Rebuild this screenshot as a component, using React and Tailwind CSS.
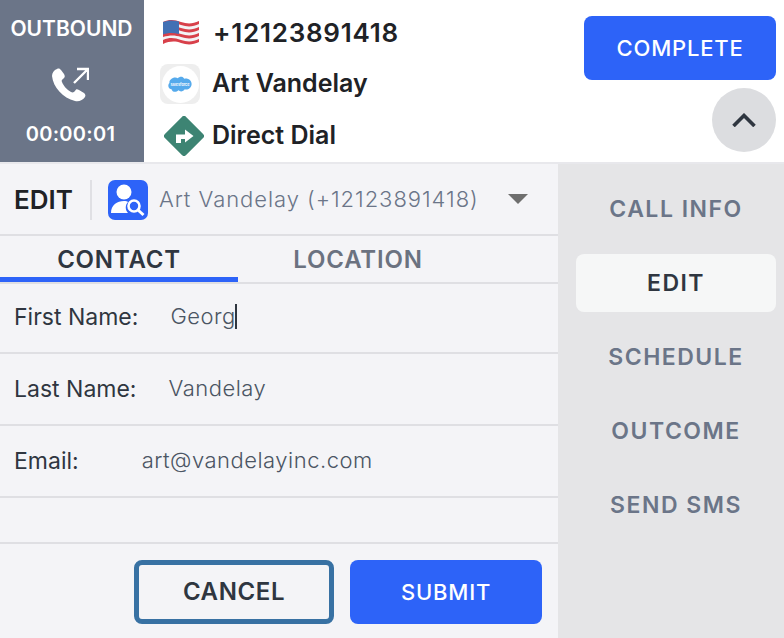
import React from 'react';

const inter = "font-['Inter',sans-serif]";

function Flag() {
    return (
        <svg width="38" height="28" viewBox="0 0 38 28">
            <path d="M1 4 C8 1 13 2 19 4 C25 6 31 6 37 3 V23 C31 26 25 26 19 24 C13 22 8 22 1 25 Z" fill="#f3f3f5" />
            <path d="M1 4 C8 1 13 2 19 4 C25 6 31 6 37 3 V6 C31 9 25 9 19 7 C13 5 8 5 1 7 Z" fill="#d8404a" />
            <path d="M1 10 C8 7 13 8 19 10 C25 12 31 12 37 9 V12 C31 15 25 15 19 13 C13 11 8 11 1 13 Z" fill="#d8404a" />
            <path d="M1 16 C8 13 13 14 19 16 C25 18 31 18 37 15 V18 C31 21 25 21 19 19 C13 17 8 17 1 19 Z" fill="#d8404a" />
            <path d="M1 22 C8 19 13 20 19 22 C25 24 31 24 37 21 V24 C31 27 25 27 19 25 C13 23 8 23 1 26 Z" fill="#d8404a" />
            <path d="M1 4 C6 2 11 2 17 3.4 V16 C11 14.5 6 14.5 1 16.5 Z" fill="#4270b4" />
        </svg>
    );
}

function CallIcon() {
    return (
        <svg width="38" height="36" viewBox="0 0 38 36" fill="none">
            <path d="M6 2 C3 3 1 6 1 9 C2 20 12 31 24 34 C28 35 32 33 34 30 C35 28 34 27 33 26 L28 23 C26 22 25 22 24 24 C23 25 22 26 20 25 C16 23 12 18 11 15 C10 13 12 12 13 11 C14 10 14 9 13 7 L10 3 C9 2 8 1 6 2 Z" fill="#fff" />
            <path d="M23 16 L36 3 M26 2 H37 V13" stroke="#fff" strokeWidth="2.4" />
        </svg>
    );
}

function SalesforceIcon() {
    return (
        <div className="w-10 h-10 rounded-lg bg-[#eeeeee] flex items-center justify-center">
            <div className="w-[37px] h-[37px] rounded-full bg-white flex items-center justify-center">
                <svg width="26" height="19" viewBox="0 0 24 18">
                    <path d="M10 3 C11.5 1 15 1 16 3.5 C19 2.5 23 4.5 23 8.5 C23 12.5 19 14.5 16.5 13.5 C15 16 12 16 10.5 14.5 C8 17 4.5 16 4 13.5 C1 13 0 9.5 2 7.5 C1.5 4 6.5 1 10 3 Z" fill="#55aaec" />
                    <text x="12" y="10" textAnchor="middle" fontSize="3.6" fill="#fff">salesforce</text>
                </svg>
            </div>
        </div>
    );
}

function DirectIcon() {
    return (
        <svg width="40" height="40" viewBox="0 0 40 40">
            <rect x="5" y="5" width="30" height="30" rx="3" transform="rotate(45 20 20)" fill="#3d8473" />
            <path d="M12 27 V18.5 H21 V13.5 L29.5 20 L21 26.5 V23 H17 V27 Z" fill="#fff" />
        </svg>
    );
}

function ContactSearchIcon() {
    return (
        <svg width="40" height="40" viewBox="0 0 40 40" className="mt-[2px]">
            <rect width="40" height="40" rx="7" fill="#2d63f8" />
            <circle cx="16" cy="12" r="7.5" fill="#fff" />
            <path d="M3 33 C3 25 9 21 16 21 C18 21 19 21 20 22 C17 25 17 30 20 33 Z" fill="#fff" />
            <circle cx="26" cy="26" r="5.5" fill="#2d63f8" stroke="#fff" strokeWidth="2.6" />
            <path d="M30 30 L35.5 35" stroke="#fff" strokeWidth="3" />
        </svg>
    );
}

function Field({ label, value, left, caret, height }) {
    return (
        <div className={`${height} flex items-center border-b-2 border-[#dfdfe3] pl-[14px]`}>
            <span className="text-[23px] text-[#2f3640]">{label}</span>
            <span className={`${left} mb-[2px] text-[22px] font-light tracking-[0.5px] text-[#4b5563] flex items-center`}>
                {value}
                {caret && <span className="w-[2px] h-[25px] -ml-px bg-[#2f3640]" />}
            </span>
        </div>
    );
}

const navItems = ['CALL INFO', 'EDIT', 'SCHEDULE', 'OUTCOME', 'SEND SMS'];

export default function App() {
    return (
        <div className={`${inter} w-[784px] h-[638px] overflow-hidden bg-white flex flex-col`}>

            {/* Call header */}
            <div className="h-[164px] shrink-0 flex border-b-2 border-[#e8e8ec]">
                <div className="w-[144px] bg-[#6b7588] text-white flex flex-col items-center font-semibold">
                    <div className="mt-[15px] pr-px text-[21px] leading-[28px]">OUTBOUND</div>
                    <div className="mt-[24px] mr-1 h-[36px]"><CallIcon /></div>
                    <div className="mt-[17px] mr-[3px] text-[20px] leading-[28px] tracking-[0.3px]">00:00:01</div>
                </div>
                <div className="flex-1 pl-4 flex flex-col text-[#202226] font-semibold text-[25px]">
                    <div className="h-[58px] pt-[6px] pl-[2px] flex items-center gap-[13px]">
                        <Flag />
                        <span className="text-[26px] tracking-[0.75px]">+12123891418</span>
                    </div>
                    <div className="h-[52px] flex items-center gap-3">
                        <SalesforceIcon />
                        <span>Art Vandelay</span>
                    </div>
                    <div className="h-[52px] pl-1 flex items-center gap-2">
                        <DirectIcon />
                        <span>Direct Dial</span>
                    </div>
                </div>
                <div className="w-[200px] pt-4 pr-2 flex flex-col items-end gap-2">
                    <button className="w-[192px] h-16 rounded-lg bg-[#2d63f8] text-white text-[22px] font-medium tracking-[0.8px]">COMPLETE</button>
                    <button className="w-16 h-16 rounded-full bg-[#dcdde0] flex items-center justify-center">
                        <svg width="24" height="14" viewBox="0 0 24 14" fill="none">
                            <path d="M1.5 13 L12 2.5 L22.5 13" stroke="#2f3640" strokeWidth="3.6" />
                        </svg>
                    </button>
                </div>
            </div>

            <div className="flex-1 flex">
                {/* Edit panel */}
                <div className="w-[558px] bg-[#f4f4f7] flex flex-col">
                    <div className="h-[72px] flex items-center border-b-2 border-[#dfdfe3] pl-[14px]">
                        <span className="text-[26px] font-semibold text-[#202226]">EDIT</span>
                        <div className="w-[2px] h-10 mt-[2px] bg-[#e0e0e4] ml-[17px] mr-4" />
                        <ContactSearchIcon />
                        <span className="ml-[11px] text-[22px] font-light tracking-[0.95px] text-[#6b7588]">Art Vandelay (+12123891418)</span>
                        <div className="ml-auto mr-[30px] w-0 h-0 border-x-[10px] border-x-transparent border-t-[10px] border-t-[#6e6e6e]" />
                    </div>
                    <div className="h-[48px] flex border-b-2 border-[#dfdfe3] text-[24px] font-semibold tracking-[0.8px]">
                        <div className="w-[238px] pt-[6px] border-b-[5px] border-[#2d63f8] text-[#2f3640] flex items-center justify-center">CONTACT</div>
                        <div className="w-[240px] pt-px text-[#6b7280] flex items-center justify-center">LOCATION</div>
                    </div>
                    <Field label="First Name:" value="Georg" left="ml-[32px]" caret height="h-[70px] pb-[2px]" />
                    <Field label="Last Name:" value="Vandelay" left="ml-[32px]" height="h-[72px]" />
                    <Field label="Email:" value="art@vandelayinc.com" left="ml-[63px]" height="h-[72px]" />
                    <div className="h-[46px] border-b-2 border-[#dfdfe3]" />
                    <div className="pt-4 pr-4 flex justify-end gap-4">
                        <button className="w-[200px] h-16 rounded-lg border-[5px] border-[#3871a3] text-[#2f3640] text-[24px] font-semibold tracking-wide">CANCEL</button>
                        <button className="w-[192px] h-16 rounded-lg bg-[#2d63f8] text-white text-[22px] font-medium tracking-[0.8px]">SUBMIT</button>
                    </div>
                </div>

                {/* Side tabs */}
                <div className="flex-1 bg-[#e5e5e7] pt-4 pl-[18px] pr-2 flex flex-col gap-4">
                    {navItems.map((item) => (
                        <div key={item}
                            className={`h-[58px] rounded-lg flex items-center justify-center text-[23px] font-semibold tracking-[1.5px] ${item === 'EDIT' ? 'bg-[#f6f7f7] text-[#2f3640]' : 'text-[#6b7588]'}`}>
                            {item}
                        </div>
                    ))}
                </div>
            </div>
        </div>
    );
}
